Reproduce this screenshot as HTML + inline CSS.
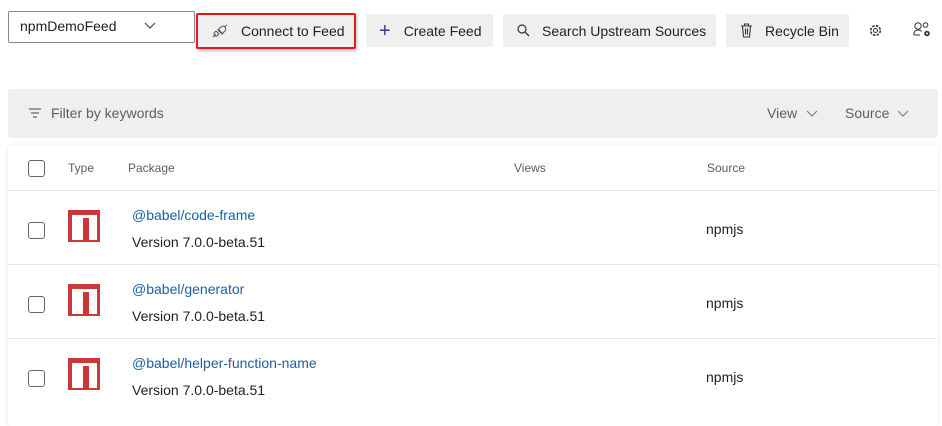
<!DOCTYPE html>
<html><head><style>
*{box-sizing:border-box;margin:0;padding:0}
body{width:942px;height:416px;background:#fff;font-family:"Segoe UI","Liberation Sans",sans-serif;color:#201f1e;position:relative;overflow:hidden;font-size:14px}
.a{position:absolute}
.btn{position:absolute;top:14px;height:33px;background:#efefef;border-radius:2px;display:flex;align-items:center;font-size:14px;color:#201f1e}
.row{position:absolute;left:8px;width:930px;border-top:1px solid #e8e8e8;height:74px}
.cb{position:absolute;width:17px;height:17px;border:1px solid #666;border-radius:3px}
.name{position:absolute;left:124px;color:#1f5f9e;font-size:14px}
.ver{position:absolute;left:124px;font-size:14px}
.src{position:absolute;left:698px;font-size:14px}
</style></head><body>
<div class="a" style="left:8px;top:11px;width:187px;height:32px;border:1px solid #8a8886;border-radius:2px;"></div>
<div class="a" style="left:20px;top:18px;font-size:14px">npmDemoFeed</div>
<svg class="a" style="left:144px;top:22px" width="12" height="8"><path d="M1 1L6 6L11 1" stroke="#444" fill="none" stroke-width="1.2"/></svg>

<div class="btn" style="left:196px;width:160px;top:13px;height:36px;border:2px solid #e0191e;box-shadow:1px 2px 3px rgba(0,0,0,.25)">
<svg style="margin-left:14px" width="16" height="14" viewBox="0 0 16 14"><path d="M1 13L4 10M4 7l3 3M6 5l5 5M9 3a2 2 0 0 1 4 4l-3 3l-4-4zM4 7l-1.5 1.5a2 2 0 0 0 3 3L7 10" stroke="#555" fill="none" stroke-width="1"/><path d="M12 3l3-2" stroke="#555" stroke-width="1"/></svg>
<span style="margin-left:13px">Connect to Feed</span></div>

<div class="btn" style="left:366px;width:127px"><span style="margin-left:13px;font-size:20px;font-weight:300;color:#5c2d91;line-height:1">+</span><span style="margin-left:13px">Create Feed</span></div>
<div class="btn" style="left:503px;width:213px"><svg style="margin-left:14px" width="13" height="13"><circle cx="5" cy="5" r="4" stroke="#333" fill="none" stroke-width="1.2"/><path d="M8 8l4 4" stroke="#333" stroke-width="1.3"/></svg><span style="margin-left:12px">Search Upstream Sources</span></div>
<div class="btn" style="left:726px;width:123px"><svg style="margin-left:14px" width="13" height="15"><path d="M1 3h11M4.5 3V1h4v2M2.5 3l1 11h6l1-11M5.5 5.5v6M7.5 5.5v6" stroke="#333" fill="none" stroke-width="1.1"/></svg><span style="margin-left:12px">Recycle Bin</span></div>
<svg class="a" style="left:869px;top:24px" width="13" height="13" viewBox="0 0 13 13"><circle cx="6.5" cy="6.5" r="2" stroke="#333" fill="none"/><circle cx="6.5" cy="6.5" r="4.8" stroke="#333" fill="none" stroke-dasharray="2.5 1.3" stroke-width="1.6"/></svg>
<svg class="a" style="left:913px;top:21px" width="19" height="17" viewBox="0 0 19 17"><circle cx="5" cy="5" r="3.2" stroke="#333" fill="none"/><path d="M0.8 14c0-4 2-5 4.2-5s3 .5 3.6 1.5M1 14h6" stroke="#333" fill="none"/><circle cx="12.5" cy="4" r="2.3" stroke="#333" fill="none"/><circle cx="14" cy="12.5" r="2.8" fill="#333"/><circle cx="14" cy="12.5" r="1" fill="#fff"/></svg>

<div class="a" style="left:8px;top:89px;width:930px;height:49px;background:#efefef;border-radius:3px"></div>
<svg class="a" style="left:29px;top:108px" width="12" height="10"><path d="M0 1h12M2 5h8M4 9h4" stroke="#666" stroke-width="1.2"/></svg>
<div class="a" style="left:51px;top:105px;color:#605e5c">Filter by keywords</div>
<div class="a" style="left:767px;top:105px;color:#605e5c">View</div>
<svg class="a" style="left:806px;top:110px" width="12" height="7"><path d="M1 1l5 5 5-5" stroke="#777" fill="none"/></svg>
<div class="a" style="left:845px;top:105px;color:#605e5c">Source</div>
<svg class="a" style="left:897px;top:110px" width="12" height="7"><path d="M1 1l5 5 5-5" stroke="#777" fill="none"/></svg>

<div class="a" style="left:8px;top:146px;width:930px;height:280px;background:#fff;box-shadow:0 0 4px rgba(0,0,0,.1);border-radius:3px"></div>
<div class="cb" style="left:28px;top:160px"></div>
<div class="a" style="left:68px;top:161px;font-size:12px;color:#605e5c">Type</div>
<div class="a" style="left:128px;top:161px;font-size:12px;color:#605e5c">Package</div>
<div class="a" style="left:514px;top:161px;font-size:12px;color:#605e5c">Views</div>
<div class="a" style="left:707px;top:161px;font-size:12px;color:#605e5c">Source</div>

<div class="row" style="top:190px">
<div class="cb" style="left:20px;top:31px"></div>
<svg class="a" style="left:60px;top:19px" width="32" height="32"><rect width="32" height="32" fill="#cb3837"/><rect x="4" y="5" width="25" height="25" fill="#fff"/><rect x="15" y="8" width="6" height="22" fill="#cb3837"/></svg>
<div class="name" style="top:16px">@babel/code-frame</div><div class="ver" style="top:43px">Version 7.0.0-beta.51</div><div class="src" style="top:30px">npmjs</div></div>
<div class="row" style="top:264px">
<div class="cb" style="left:20px;top:31px"></div>
<svg class="a" style="left:60px;top:19px" width="32" height="32"><rect width="32" height="32" fill="#cb3837"/><rect x="4" y="5" width="25" height="25" fill="#fff"/><rect x="15" y="8" width="6" height="22" fill="#cb3837"/></svg>
<div class="name" style="top:16px">@babel/generator</div><div class="ver" style="top:43px">Version 7.0.0-beta.51</div><div class="src" style="top:30px">npmjs</div></div>
<div class="row" style="top:338px">
<div class="cb" style="left:20px;top:31px"></div>
<svg class="a" style="left:60px;top:19px" width="32" height="32"><rect width="32" height="32" fill="#cb3837"/><rect x="4" y="5" width="25" height="25" fill="#fff"/><rect x="15" y="8" width="6" height="22" fill="#cb3837"/></svg>
<div class="name" style="top:16px">@babel/helper-function-name</div><div class="ver" style="top:43px">Version 7.0.0-beta.51</div><div class="src" style="top:30px">npmjs</div></div>
</body></html>
